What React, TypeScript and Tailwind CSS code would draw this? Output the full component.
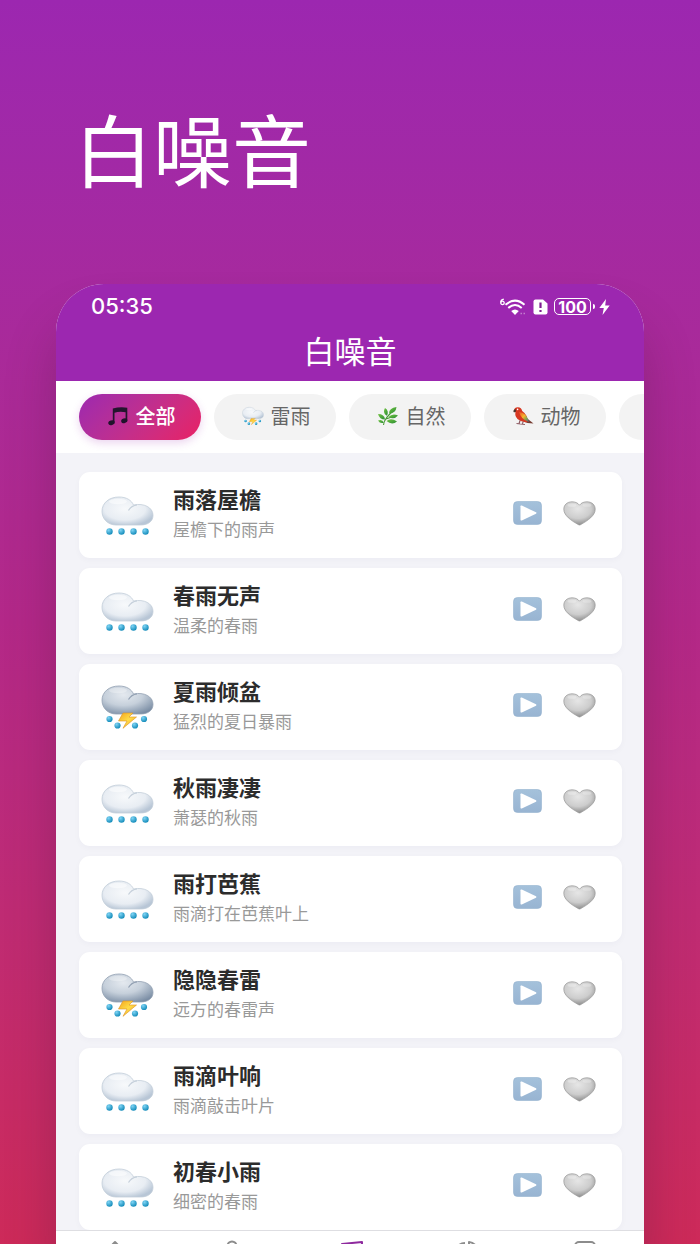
import type { ReactNode } from "react";

type Sound = { title: string; note: string; storm?: boolean };

const sounds: Sound[] = [
  { title: "雨落屋檐", note: "屋檐下的雨声" },
  { title: "春雨无声", note: "温柔的春雨" },
  { title: "夏雨倾盆", note: "猛烈的夏日暴雨", storm: true },
  { title: "秋雨凄凄", note: "萧瑟的秋雨" },
  { title: "雨打芭蕉", note: "雨滴打在芭蕉叶上" },
  { title: "隐隐春雷", note: "远方的春雷声", storm: true },
  { title: "雨滴叶响", note: "雨滴敲击叶片" },
  { title: "初春小雨", note: "细密的春雨" },
];

/* Gradients shared by every drawing on the page */
function Gradients() {
  return (
    <svg className="absolute h-0 w-0" aria-hidden="true">
      <defs>
        <radialGradient id="cloud" cx="0.45" cy="0.42" r="0.62">
          <stop offset="0" stopColor="#f7f9fb" />
          <stop offset="0.65" stopColor="#e8edf3" />
          <stop offset="1" stopColor="#b8c6d6" />
        </radialGradient>
        <radialGradient id="darkCloud" cx="0.42" cy="0.32" r="0.75">
          <stop offset="0" stopColor="#e4e9ef" />
          <stop offset="0.5" stopColor="#c6d0db" />
          <stop offset="1" stopColor="#7a8da4" />
        </radialGradient>
        <radialGradient id="drop" cx="0.35" cy="0.3" r="0.7">
          <stop offset="0" stopColor="#7fd4f5" />
          <stop offset="1" stopColor="#168dbb" />
        </radialGradient>
        <linearGradient id="bolt" x1="0" y1="0" x2="1" y2="1">
          <stop offset="0" stopColor="#f4a51c" />
          <stop offset="0.5" stopColor="#ffdc48" />
          <stop offset="1" stopColor="#ee941c" />
        </linearGradient>
        <linearGradient id="play" x1="0" y1="0" x2="0" y2="1">
          <stop offset="0" stopColor="#a4c1db" />
          <stop offset="1" stopColor="#98b4d2" />
        </linearGradient>
        <radialGradient id="heart" cx="0.45" cy="0.3" r="0.7">
          <stop offset="0" stopColor="#e6e6e6" />
          <stop offset="0.6" stopColor="#cdcdcd" />
          <stop offset="1" stopColor="#8e8e8e" />
        </radialGradient>
        <linearGradient id="leaf" x1="0" y1="0" x2="1" y2="1">
          <stop offset="0" stopColor="#75c442" />
          <stop offset="1" stopColor="#288d34" />
        </linearGradient>
        <linearGradient id="wing" x1="0" y1="0" x2="1" y2="1">
          <stop offset="0" stopColor="#e94b22" />
          <stop offset="0.45" stopColor="#f6b62c" />
          <stop offset="0.7" stopColor="#87a54d" />
          <stop offset="1" stopColor="#3b6b9c" />
        </linearGradient>
      </defs>
    </svg>
  );
}

function Cloud({ dark = false }: { dark?: boolean }) {
  const fill = dark ? "url(#darkCloud)" : "url(#cloud)";
  return (
    <g>
      <path
        d="M15 29C6.500 29 1 22.500 1 15.300C1 7 8 1 18 1C25.500 1 30.500 4.300 32.500 9C43 6.800 52 11.500 52 19.200C52 25.500 47 29 39.500 29Z"
        fill={fill}
        stroke={dark ? "#93a1b3" : "#c3ced9"}
        strokeWidth="0.8"
      />
      <path d="M27.500 14.500C29.500 11 32 9.300 36 8.800" fill="none" stroke={dark ? "#93a1b3" : "#c6d0db"} strokeWidth="1.200" />
      <ellipse cx="17" cy="5.500" rx="9" ry="2.800" fill="#fff" opacity={dark ? 0.3 : 0.5} />
    </g>
  );
}

function RainIcon() {
  return (
    <svg viewBox="0 -3 53 43" className="w-[53px] shrink-0" aria-hidden="true">
      <Cloud />
      {[8.500, 20.500, 32.500, 44.500].map((x) => (
        <circle key={x} cx={x} cy="35.500" r="3.200" fill="url(#drop)" />
      ))}
    </svg>
  );
}

function StormIcon({ small = false }: { small?: boolean }) {
  return (
    <svg viewBox="0 -2 53 46" className={small ? "w-[22px] shrink-0" : "w-[53px] shrink-0"} aria-hidden="true">
      <Cloud dark={!small} />
      {[
        [8.500, 34],
        [16.500, 40.500],
        [34, 40.500],
        [43, 34],
      ].map(([x, y]) => (
        <circle key={x} cx={x} cy={y} r="3.100" fill="url(#drop)" />
      ))}
      <path d="M22 28H32L28 32H35.500L22 43.300L26 36H17.500Z" fill="url(#bolt)" stroke="#dc9222" strokeWidth="0.6" />
    </svg>
  );
}

function MusicIcon() {
  return (
    <svg viewBox="0 0 22 20" className="w-[22px] shrink-0" aria-hidden="true">
      <path d="M5.800 2.600Q13 .4 20.300 1.700V14.500H18.600V6.300Q12.500 5.200 7.500 6.800V16.500H5.800Z" fill="#24152e" />
      <ellipse cx="4.500" cy="16.700" rx="3.300" ry="2.300" transform="rotate(-18 4.500 16.700)" fill="#20132b" />
      <ellipse cx="17.300" cy="14.700" rx="3.200" ry="2.300" transform="rotate(-18 17.300 14.700)" fill="#20132b" />
    </svg>
  );
}

function HerbIcon() {
  return (
    <svg viewBox="0 0 22 20" className="w-[22px] shrink-0" aria-hidden="true">
      <path d="M6.500 19Q7 12 17.500 4M9 13Q14 11 19 10" fill="none" stroke="#4a9b36" strokeWidth="1.100" />
      <g fill="url(#leaf)">
        <path d="M12 7.500Q12 2 19.500 1Q19 7 12 7.500Z" />
        <path d="M9.800 9.800Q5 7 8 2Q12.500 5 9.800 9.800Z" />
        <path d="M8 13.500Q2.500 13.500 1 8Q7.500 8 8 13.500Z" />
        <path d="M11.500 11Q15.500 6.800 21 9.500Q17 14.200 11.500 11Z" />
        <path d="M9.500 15Q14 11.500 20 15.500Q15 19.500 9.500 15Z" />
        <path d="M6.800 16.800Q3 18 1 14.500Q5.500 13 6.800 16.800Z" />
      </g>
    </svg>
  );
}

function ParrotIcon() {
  return (
    <svg viewBox="0 0 22 20" className="w-[22px] shrink-0" aria-hidden="true">
      <path d="M12 10L21.500 17.500L15.500 17L10.500 15Z" fill="#763c32" />
      <path d="M2 4.500Q2.500 1 6 1.200Q9.500 1.500 10.200 5Q16 9 15.500 16Q10 17 5.500 13Q2.500 9.500 3.500 6.500Z" fill="#d73822" />
      <path d="M7 6Q14.500 6.500 17 16Q9 13.500 7 6Z" fill="url(#wing)" />
      <path d="M3.800 3.200Q1.200 2.800 1.500 6Q3.500 6.800 4 5Z" fill="#48352f" />
      <circle cx="5.600" cy="3.400" r=".8" fill="#fff" />
      <path d="M8 14.500L7 18M11 15.500L10.500 18.500M4.500 17.500L13 18.500" fill="none" stroke="#8d5a62" strokeWidth="1.200" />
    </svg>
  );
}

function PlayIcon() {
  return (
    <svg viewBox="0 0 29 24" className="w-[29px]" aria-hidden="true">
      <rect x="0.500" y="0.500" width="28" height="23" rx="4" fill="url(#play)" stroke="#93b1cf" strokeWidth="0.6" />
      <path d="M7.500 5.200Q7.500 4 8.800 4.600L23 11.300Q24 12 23 12.700L8.800 19.400Q7.500 20 7.500 18.800Z" fill="#fff" />
    </svg>
  );
}

function HeartIcon() {
  return (
    <svg viewBox="0 0 33 25" className="w-[33px]" aria-hidden="true">
      <path
        d="M16.500 4.200C18.300 1.700 21 .8 24 .8C28.800 .8 32.200 3.800 32.200 8.300C32.200 14.500 25 19.500 17.500 23.700Q16.500 24.300 15.500 23.700C8 19.500 .8 14.500 .8 8.300C.8 3.800 4.200 .8 9 .8C12 .8 14.700 1.700 16.500 4.200Z"
        fill="url(#heart)"
        stroke="#979797"
        strokeWidth="0.7"
      />
      <ellipse cx="9" cy="4.200" rx="4.500" ry="1.600" fill="#fff" opacity="0.3" />
      <ellipse cx="24" cy="4.200" rx="4.500" ry="1.600" fill="#fff" opacity="0.25" />
    </svg>
  );
}

function StatusIcons() {
  return (
    <div className="flex items-center gap-[6px] text-white">
      <svg viewBox="0 0 28 18" className="w-[28px]" aria-hidden="true" fill="none" stroke="currentColor">
        <path d="M4.800 1.200Q1.700 1.800 1.700 4.500" strokeWidth="1.300" />
        <circle cx="3.500" cy="4.900" r="1.700" strokeWidth="1.300" />
        <path d="M6.500 6.800Q16 -1.500 25.500 6.800" strokeWidth="2" />
        <path d="M9.300 9.900Q16 4 22.700 9.900" strokeWidth="2" />
        <path d="M12.200 13Q16 9.800 19.800 13L16 17Z" fill="currentColor" stroke="none" />
        <path d="M21.500 15.500H23M24.500 15.500H26" strokeWidth="1.500" opacity="0.4" />
      </svg>
      <svg viewBox="0 0 15 16" className="w-[15px]" aria-hidden="true">
        <path d="M2.500 .5H10L14.500 4.500V13.500Q14.500 15.500 12.500 15.500H2.500Q.5 15.500 .5 13.500V2.500Q.5 .5 2.500 .5Z" fill="#fff" />
        <path d="M7.500 3.500V9M7.500 11V13" stroke="#7f1d91" strokeWidth="2.200" />
      </svg>
      <div className="flex items-center gap-[2px]">
        <span className="flex h-[17px] w-[37px] items-center justify-center rounded-[5px] border border-white font-['Inter'] text-[16px] font-bold leading-none">
          100
        </span>
        <span className="h-[5px] w-[2px] rounded-r bg-white" />
        <svg viewBox="0 0 11 16" className="ml-[2px] w-[11px]" aria-hidden="true">
          <path d="M7 0L.3 9H4.800L3.500 16L10.700 6.500H6.200Z" fill="#fff" />
        </svg>
      </div>
    </div>
  );
}

function Chip({ icon, label, active = false }: { icon?: ReactNode; label: string; active?: boolean }) {
  return (
    <button
      type="button"
      className={
        active
          ? "flex h-[46px] w-[122px] shrink-0 items-center justify-center gap-[7px] rounded-full bg-linear-135 from-[#9c27b0] to-[#e91e63] pl-[2px] pb-[2px] text-[20px] font-medium text-white shadow-[0_3px_8px_rgba(156,39,176,0.2)]"
          : "flex h-[46px] w-[122px] shrink-0 items-center justify-center gap-[7px] rounded-full bg-[#f3f3f3] pl-[2px] pb-[2px] text-[20px] text-[#666666]"
      }
    >
      {icon}
      {label}
    </button>
  );
}

function SoundCard({ title, note, storm }: Sound) {
  return (
    <li className="flex h-[86px] shrink-0 items-center rounded-[11px] bg-white pb-[2px] pl-[22px] pr-[26px] shadow-[0_2px_6px_rgba(30,30,80,0.03)]">
      {storm ? <StormIcon /> : <RainIcon />}
      <div className="ml-[19px] min-w-0 flex-1">
        <h2 className="text-[22px] font-bold leading-[29px] text-[#2c2c2c]">{title}</h2>
        <p className="text-[17px] leading-[31px] text-[#999999]">{note}</p>
      </div>
      <div className="flex items-center gap-[21px] pb-[2px]">
        <button type="button" aria-label={`播放 ${title}`}>
          <PlayIcon />
        </button>
        <button type="button" aria-label={`收藏 ${title}`}>
          <HeartIcon />
        </button>
      </div>
    </li>
  );
}

const tabs: { name: string; active?: boolean; art: ReactNode }[] = [
  { name: "首页", art: <path d="M4 13L14 3L24 13V26H4Z" /> },
  { name: "冥想", art: <><circle cx="14" cy="7" r="4.500" /><path d="M5 26Q6 13 14 13Q22 13 23 26" /></> },
  { name: "白噪音", active: true, art: <path d="M6 22V5L26 3V20M6 8.500L26 6.500" /> },
  { name: "统计", art: <><path d="M15 3A10 10 0 0 1 24 13H15Z" /><path d="M11 4A11 11 0 1 0 22 18" /></> },
  { name: "我的", art: <rect x="4" y="3" width="20" height="22" rx="4" /> },
];

export default function App() {
  return (
    <div className="flex h-screen flex-col overflow-hidden bg-linear-to-b from-[#9c27b0] via-[#b32888] via-50% to-[#cd2a59] px-[8%] font-['Noto_Sans_CJK_SC',sans-serif]">
      <Gradients />
      <h1 className="shrink-0 px-[18px] pt-[90px] text-[79px] leading-[115px] text-white">白噪音</h1>
      <main className="mt-[79px] flex min-h-0 flex-1 flex-col overflow-hidden rounded-t-[48px] bg-[#f3f3f8] shadow-[0_40px_50px_rgba(70,20,60,0.3)]">
        <header className="shrink-0 bg-[#9c27b0] text-white">
          <div className="flex h-[45px] items-center justify-between pl-[35px] pr-[34px]">
            <time className="font-['Inter'] text-[22px] font-medium">05:35</time>
            <StatusIcons />
          </div>
          <div className="h-[52px] text-center text-[31px] leading-[42px]">白噪音</div>
        </header>
        <nav aria-label="分类" className="flex h-[72px] shrink-0 items-center gap-[13px] overflow-hidden bg-white pl-[23px]">
          <Chip active icon={<MusicIcon />} label="全部" />
          <Chip icon={<StormIcon small />} label="雷雨" />
          <Chip icon={<HerbIcon />} label="自然" />
          <Chip icon={<ParrotIcon />} label="动物" />
          <Chip label="" />
        </nav>
        <ul className="flex min-h-0 flex-1 flex-col gap-[10px] overflow-hidden pl-[23px] pr-[22px] pt-[19px]">
          {sounds.map((sound) => (
            <SoundCard key={sound.title} {...sound} />
          ))}
        </ul>
        <nav aria-label="主导航" className="flex h-[14px] shrink-0 justify-around overflow-hidden border-t border-[#dedee2] bg-white pt-[8px]">
          {tabs.map((tab) => (
            <a key={tab.name} href="#" aria-label={tab.name} className={tab.active ? "text-[#8e2a9e]" : "text-[#8c8c8c]"}>
              <svg viewBox="0 0 28 28" className="w-[28px]" fill="none" stroke="currentColor" strokeWidth="2" strokeLinejoin="round" aria-hidden="true">
                {tab.art}
              </svg>
            </a>
          ))}
        </nav>
      </main>
    </div>
  );
}
